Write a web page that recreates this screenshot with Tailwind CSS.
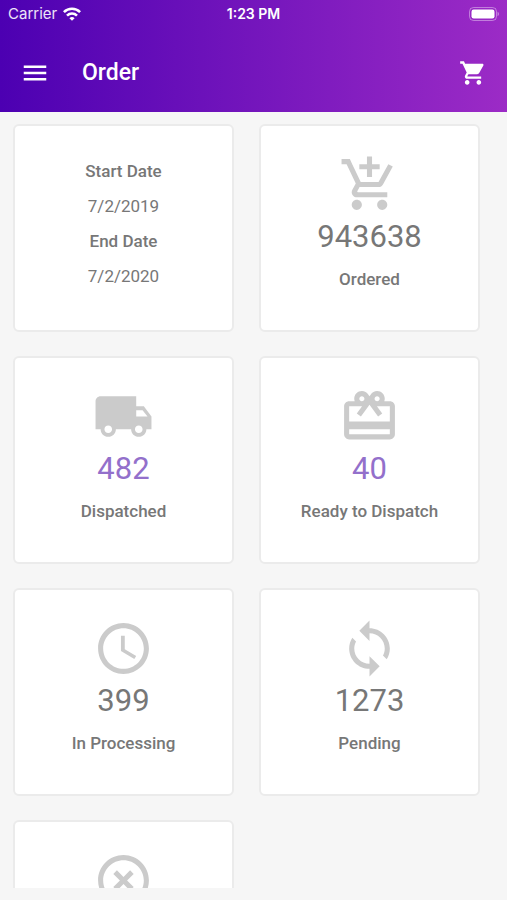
<!DOCTYPE html>
<html lang="en">
<head>
  <meta charset="UTF-8">
  <meta name="viewport" content="width=device-width, initial-scale=1.0">
  <title>Order</title>
  <script src="https://cdn.jsdelivr.net/npm/@tailwindcss/browser@4"></script>
</head>
<body class="h-screen flex flex-col bg-[#f6f6f6] font-[Roboto,sans-serif] text-[#777777]">

  <!-- Header -->
  <header class="shrink-0 bg-linear-to-r/srgb from-[#4c00b2] to-[#9c2bc6] text-white">
    <!-- Status bar -->
    <div class="grid grid-cols-3 items-center h-7 px-2 font-[Inter,sans-serif] text-[15px]">
      <div class="flex items-center gap-1.5">
        <span class="text-white/90">Carrier</span>
        <svg class="w-[18px] h-[14px]" viewBox="0 0 18 14" fill="none" stroke="currentColor" stroke-width="2.6" aria-hidden="true">
          <path d="M.9 5.1a11.5 11.5 0 0 1 16.2 0"/>
          <path d="M4 8.6a7.1 7.1 0 0 1 10 0"/>
          <path d="M9 13.8 6.4 11.2a3.7 3.7 0 0 1 5.2 0z" fill="currentColor" stroke="none"/>
        </svg>
      </div>
      <span class="text-center font-semibold text-sm">1:23 PM</span>
      <svg class="w-[30px] h-[14px] justify-self-end" viewBox="0 0 30 14" aria-hidden="true">
        <rect x=".5" y=".5" width="27" height="13" rx="4" fill="none" stroke="#fff" stroke-opacity=".4"/>
        <rect x="2.5" y="2.5" width="23" height="9" rx="2.2" fill="#fff"/>
        <path d="M28.6 4.8c1.6.7 1.6 3.7 0 4.4z" fill="#fff" fill-opacity=".5"/>
      </svg>
    </div>
    <!-- Nav bar -->
    <div class="flex items-center h-[84px] pt-1.5 px-5">
      <button type="button" aria-label="Menu">
        <svg class="size-[30px]" viewBox="0 0 24 24" fill="currentColor"><path d="M3 18h18v-2H3v2zm0-5h18v-2H3v2zm0-7v2h18V6H3z"/></svg>
      </button>
      <h1 class="ml-8 text-[23px] leading-8 font-medium">Order</h1>
      <button type="button" aria-label="Cart" class="ml-auto">
        <svg class="size-7" viewBox="0 0 24 24" fill="currentColor"><path d="M7 18c-1.1 0-1.99.9-1.99 2S5.9 22 7 22s2-.9 2-2-.9-2-2-2zM1 2v2h2l3.6 7.59-1.35 2.45c-.16.28-.25.61-.25.96 0 1.1.9 2 2 2h12v-2H7.42c-.14 0-.25-.11-.25-.25l.03-.12.9-1.63h7.45c.75 0 1.41-.41 1.75-1.03l3.58-6.49c.08-.14.12-.31.12-.48 0-.55-.45-1-1-1H5.21l-.94-2H1zm16 16c-1.1 0-1.99.9-1.99 2s.89 2 1.99 2 2-.9 2-2-.9-2-2-2z"/></svg>
      </button>
    </div>
  </header>

  <!-- Order cards -->
  <main class="flex-1 min-h-0 mb-3 overflow-y-auto [scrollbar-width:none]">
    <div class="grid grid-cols-2 gap-x-[25px] gap-y-6 pt-3 pl-[13px] pr-[27px]">

      <dl class="h-52 pt-7 bg-white border-2 border-[#ebebeb] rounded-md text-center text-[17px] leading-[35px]">
        <dt class="font-medium">Start Date</dt>
        <dd>7/2/2019</dd>
        <dt class="font-medium">End Date</dt>
        <dd>7/2/2020</dd>
      </dl>

      <div class="flex flex-col items-center h-52 pt-7 bg-white border-2 border-[#ebebeb] rounded-md">
        <svg class="size-[61px] text-[#cbcbcb]" viewBox="0 0 24 24" fill="currentColor" aria-hidden="true"><path d="M11 9h2V6h3V4h-3V1h-2v3H8v2h3v3zm-4 9c-1.1 0-1.99.9-1.99 2S5.9 22 7 22s2-.9 2-2-.9-2-2-2zm10 0c-1.1 0-1.99.9-1.99 2s.89 2 1.99 2 2-.9 2-2-.9-2-2-2zm-9.83-3.25l.03-.12.9-1.63h7.45c.75 0 1.41-.41 1.75-1.03l3.86-7.01L19.42 4h-.01l-1.1 2-2.76 5H8.53l-.13-.27L6.16 6l-.95-2-.94-2H1v2h2l3.6 7.59-1.35 2.45c-.16.28-.25.61-.25.96 0 1.1.9 2 2 2h12v-2H7.42c-.13 0-.25-.11-.25-.25z"/></svg>
        <p class="text-[31px] leading-[43px]">943638</p>
        <p class="mt-1 text-[17px] leading-[35px] font-medium">Ordered</p>
      </div>

      <div class="flex flex-col items-center h-52 pt-7 bg-white border-2 border-[#ebebeb] rounded-md">
        <svg class="size-[61px] text-[#cbcbcb]" viewBox="0 0 24 24" fill="currentColor" aria-hidden="true"><path d="M20 8h-3V4H3c-1.1 0-2 .9-2 2v11h2c0 1.66 1.34 3 3 3s3-1.34 3-3h6c0 1.66 1.34 3 3 3s3-1.34 3-3h2v-5l-3-4zM6 18.5c-.83 0-1.5-.67-1.5-1.5s.67-1.5 1.5-1.5 1.5.67 1.5 1.5-.67 1.5-1.5 1.5zm13.5-9l1.96 2.5H17V9.5h2.5zm-1.5 9c-.83 0-1.5-.67-1.5-1.5s.67-1.5 1.5-1.5 1.5.67 1.5 1.5-.67 1.5-1.5 1.5z"/></svg>
        <a href="#dispatched" class="text-[31px] leading-[43px] text-[#9370cb]">482</a>
        <p class="mt-1 text-[17px] leading-[35px] font-medium">Dispatched</p>
      </div>

      <div class="flex flex-col items-center h-52 pt-7 bg-white border-2 border-[#ebebeb] rounded-md">
        <svg class="size-[61px] text-[#cbcbcb]" viewBox="0 0 24 24" fill="currentColor" aria-hidden="true"><path d="M20 6h-2.18c.11-.31.18-.65.18-1 0-1.66-1.34-3-3-3-1.05 0-1.96.54-2.5 1.35l-.5.67-.5-.68C10.96 2.54 10.05 2 9 2 7.34 2 6 3.34 6 5c0 .35.07.69.18 1H4c-1.11 0-1.99.89-1.99 2L2 19c0 1.11.89 2 2 2h16c1.11 0 2-.89 2-2V8c0-1.11-.89-2-2-2zm-5-2c.55 0 1 .45 1 1s-.45 1-1 1-1-.45-1-1 .45-1 1-1zM9 4c.55 0 1 .45 1 1s-.45 1-1 1-1-.45-1-1 .45-1 1-1zm11 15H4v-2h16v2zm0-5H4V8h5.08L7 10.83 8.62 12 11 8.76l1-1.36 1 1.36L15.38 12 17 10.83 14.92 8H20v6z"/></svg>
        <a href="#ready" class="text-[31px] leading-[43px] text-[#9370cb]">40</a>
        <p class="mt-1 text-[17px] leading-[35px] font-medium">Ready to Dispatch</p>
      </div>

      <div class="flex flex-col items-center h-52 pt-7 bg-white border-2 border-[#ebebeb] rounded-md">
        <svg class="size-[61px] text-[#cbcbcb]" viewBox="0 0 24 24" fill="currentColor" aria-hidden="true"><path d="M11.99 2C6.47 2 2 6.48 2 12s4.47 10 9.99 10C17.52 22 22 17.52 22 12S17.52 2 11.99 2zM12 20c-4.42 0-8-3.58-8-8s3.58-8 8-8 8 3.58 8 8-3.58 8-8 8zm.5-13H11v6l5.25 3.15.75-1.23-4.5-2.67z"/></svg>
        <p class="text-[31px] leading-[43px]">399</p>
        <p class="mt-1 text-[17px] leading-[35px] font-medium">In Processing</p>
      </div>

      <div class="flex flex-col items-center h-52 pt-7 bg-white border-2 border-[#ebebeb] rounded-md">
        <svg class="size-[61px] text-[#cbcbcb]" viewBox="0 0 24 24" fill="currentColor" aria-hidden="true"><path d="M12 4V1L8 5l4 4V6c3.31 0 6 2.69 6 6 0 1.01-.25 1.97-.7 2.8l1.46 1.46C19.54 15.03 20 13.57 20 12c0-4.42-3.58-8-8-8zm0 14c-3.31 0-6-2.69-6-6 0-1.01.25-1.97.7-2.8L5.24 7.74C4.46 8.97 4 10.43 4 12c0 4.42 3.58 8 8 8v3l4-4-4-4v3z"/></svg>
        <p class="text-[31px] leading-[43px]">1273</p>
        <p class="mt-1 text-[17px] leading-[35px] font-medium">Pending</p>
      </div>

      <div class="flex flex-col items-center h-52 pt-7 bg-white border-2 border-[#ebebeb] rounded-md">
        <svg class="size-[61px] text-[#cbcbcb]" viewBox="0 0 24 24" fill="currentColor" aria-hidden="true"><path d="M14.59 8L12 10.59 9.41 8 8 9.41 10.59 12 8 14.59 9.41 16 12 13.41 14.59 16 16 14.59 13.41 12 16 9.41 14.59 8zM12 2C6.47 2 2 6.47 2 12s4.47 10 10 10 10-4.47 10-10S17.53 2 12 2zm0 18c-4.41 0-8-3.59-8-8s3.59-8 8-8 8 3.59 8 8-3.59 8-8 8z"/></svg>
      </div>

    </div>
  </main>

</body>
</html>
